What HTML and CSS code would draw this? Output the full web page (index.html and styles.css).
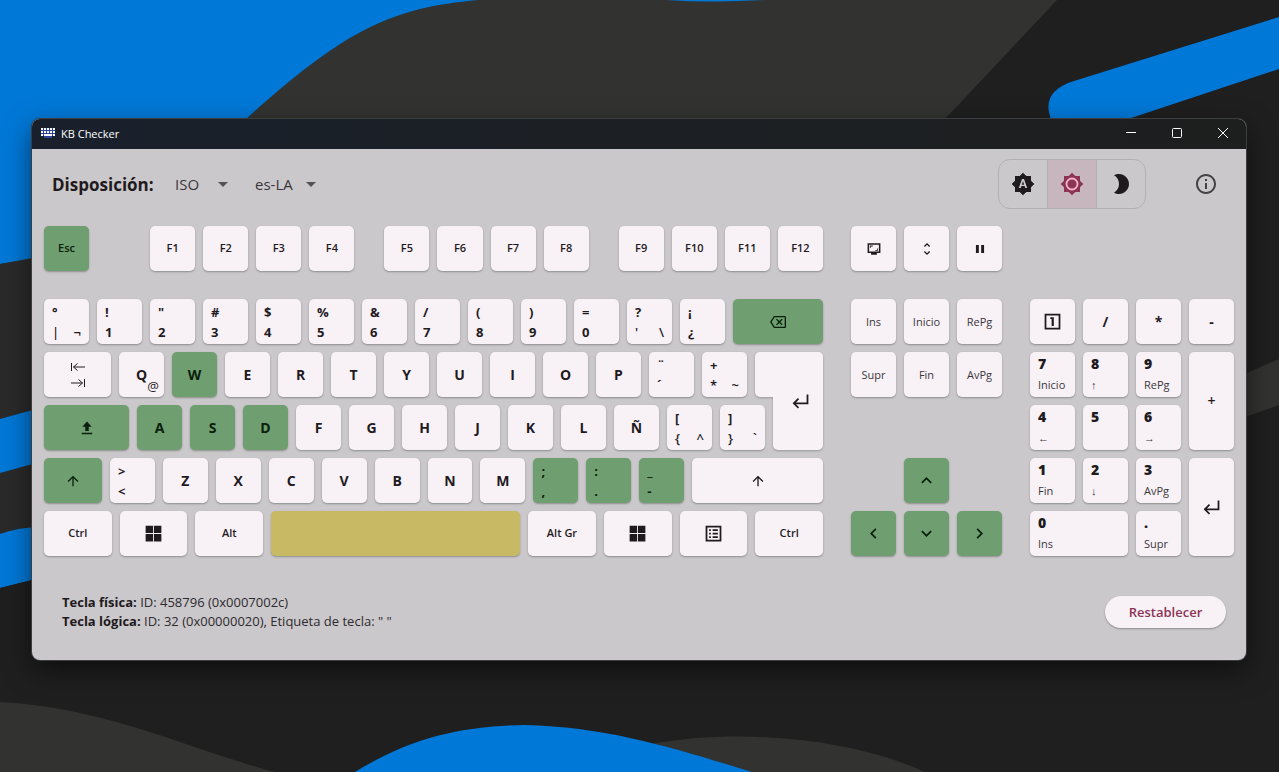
FILE: index.html
```html
<!DOCTYPE html>
<html lang="es">
<head>
<meta charset="utf-8">
<title>KB Checker</title>
<link rel="stylesheet" href="styles.css">
</head>
<body>
<svg class="wallpaper" viewBox="0 0 1279 772" preserveAspectRatio="none" aria-hidden="true">
  <rect width="1279" height="772" fill="#201f20"/>
  <path d="M0 0H1057L945 119V400H0Z" fill="#323231"/>
  <path d="M0 0H478C390 8 345 30 246 119V220L32 258L0 264Z" fill="#0078d7"/>
  <path d="M665 0H765Q715 3 665 0Z" fill="#0078d7"/>
  <path d="M1279 17L1074 81C1055 87 1046 97 1049 112L1052 125H1110L1279 69Z" fill="#0078d7"/>
  <path d="M0 264L40 258V600H0Z" fill="#2b2a2a"/>
  <path d="M0 419L40 408V462L0 473Z" fill="#0078d7"/>
  <path d="M0 534Q20 527 40 527V578L0 588Z" fill="#0078d7"/>
  <path d="M0 588L40 578V610H0Z" fill="#201f20"/>
  <path d="M1240 376L1279 359V405L1240 419Z" fill="#323231"/>
  <path d="M0 702C110 708 190 750 275 772H0Z" fill="#323231"/>
  <path d="M650 744C740 728 850 738 925 772H650Z" fill="#323231"/>
  <path d="M355 772C410 738 460 726 525 725C610 727 680 750 752 772Z" fill="#0078d7"/>
</svg>

<svg hidden>
  <symbol id="i-up" viewBox="0 0 24 24"><path d="M4 12l1.4 1.4L11 7.8V20h2V7.8l5.6 5.6L20 12l-8-8z"/></symbol>
  <symbol id="i-win" viewBox="0 0 24 24"><path d="M3 3h8.500v8.500H3zM12.500 3H21v8.500h-8.500zM3 12.500h8.500V21H3zM12.500 12.500H21V21h-8.500z"/></symbol>
  <symbol id="i-chev" viewBox="0 0 24 24"><path d="M12 8l-6 6 1.400 1.400L12 10.800l4.600 4.600L18 14z"/></symbol>
  <symbol id="i-enter" viewBox="0 0 24 24"><path d="M19 4v9H6.800l3.600-3.600L9 8l-6 6 6 6 1.400-1.400L6.800 15H21V4z"/></symbol>
</svg>

<main class="window">
  <header class="titlebar">
    <svg class="app-icon" viewBox="0 0 14 10" fill="#a9bbf0"><path fill="#2a439c" d="M0 0h14v8h-3v2H3V8H0z"/><path d="M0 0h2v2H0zM3 0h2v2H3zM6 0h2v2H6zM9 0h2v2H9zM12 0h2v2h-2zM0 3h2v2H0zM3 3h2v2H3zM6 3h2v2H6zM9 3h2v2H9zM12 3h2v2h-2zM0 6h2v2H0zM12 6h2v2h-2zM3 6h8v2H3z"/></svg>
    <h1 class="title">KB Checker</h1>
    <button class="win-btn" aria-label="Minimizar"><svg viewBox="0 0 10 10"><path d="M0 4.500h10"/></svg></button>
    <button class="win-btn" aria-label="Maximizar"><svg viewBox="0 0 10 10"><rect x=".5" y=".5" width="9" height="9" rx="1"/></svg></button>
    <button class="win-btn" aria-label="Cerrar"><svg viewBox="0 0 10 10"><path d="M0 0l10 10M10 0L0 10"/></svg></button>
  </header>

  <section class="toolbar">
    <span class="toolbar-label">Disposición:</span>
    <div class="picker picker-shape">
      <select aria-label="Disposición física"><option>ISO</option></select>
      <svg class="caret" viewBox="0 0 10 5"><path d="M0 0h10L5 5z"/></svg>
    </div>
    <div class="picker picker-lang">
      <select aria-label="Idioma"><option>es-LA</option></select>
      <svg class="caret" viewBox="0 0 10 5"><path d="M0 0h10L5 5z"/></svg>
    </div>
    <div class="themes">
      <button class="theme" aria-label="Tema automático"><svg viewBox="0 0 24 24"><path fill-rule="evenodd" d="M20 8.700V4h-4.700L12 .700 8.700 4H4v4.700L.700 12 4 15.300V20h4.700l3.300 3.300 3.300-3.300H20v-4.700l3.300-3.300zM14.300 16l-.7-2h-3.200l-.7 2H7.800L11 7h2l3.200 9zM10.850 12.650h2.300L12 9z"/></svg></button>
      <button class="theme theme-on" aria-label="Tema claro" aria-pressed="true"><svg viewBox="0 0 24 24"><path d="M20 8.700V4h-4.700L12 .700 8.700 4H4v4.700L.700 12 4 15.300V20h4.700l3.300 3.300 3.300-3.300H20v-4.700l3.300-3.300z"/><circle cx="12" cy="12" r="5.500" fill="none" stroke="#f3b4c8" stroke-width="1.800"/></svg></button>
      <button class="theme" aria-label="Tema oscuro"><svg viewBox="0 0 24 24"><path d="M10 2c-1.800 0-3.500.5-5 1.350C8 5.080 10 8.300 10 12s-2 6.920-5 8.650C6.500 21.500 8.200 22 10 22c5.520 0 10-4.480 10-10S15.520 2 10 2z"/></svg></button>
    </div>
    <button class="info" aria-label="Información"><svg viewBox="0 0 24 24"><path d="M11 7h2v2h-2zm0 4h2v6h-2zm1-9C6.480 2 2 6.480 2 12s4.480 10 10 10 10-4.480 10-10S17.520 2 12 2zm0 18c-4.410 0-8-3.590-8-8s3.590-8 8-8 8 3.590 8 8-3.590 8-8 8z"/></svg></button>
  </section>

  <section class="keyboard">
    <div class="block block-main">
      <div class="row row-fn">
        <button class="key small on">Esc</button><span class="space-wide"></span>
        <button class="key small">F1</button><button class="key small">F2</button><button class="key small">F3</button><button class="key small">F4</button><span class="space"></span>
        <button class="key small">F5</button><button class="key small">F6</button><button class="key small">F7</button><button class="key small">F8</button><span class="space"></span>
        <button class="key small">F9</button><button class="key small">F10</button><button class="key small">F11</button><button class="key small">F12</button>
      </div>
      <div class="row">
        <button class="key duo"><span>°</span><span class="pair"><b>|</b><b>¬</b></span></button>
        <button class="key duo"><span>!</span><span>1</span></button>
        <button class="key duo"><span>"</span><span>2</span></button>
        <button class="key duo"><span>#</span><span>3</span></button>
        <button class="key duo"><span>$</span><span>4</span></button>
        <button class="key duo"><span>%</span><span>5</span></button>
        <button class="key duo"><span>&amp;</span><span>6</span></button>
        <button class="key duo"><span>/</span><span>7</span></button>
        <button class="key duo"><span>(</span><span>8</span></button>
        <button class="key duo"><span>)</span><span>9</span></button>
        <button class="key duo"><span>=</span><span>0</span></button>
        <button class="key duo"><span>?</span><span class="pair"><b>'</b><b>\</b></span></button>
        <button class="key duo"><span>¡</span><span>¿</span></button>
        <button class="key w90 on" aria-label="Retroceso"><svg class="ico16" viewBox="0 0 24 24"><path d="M22 3H7c-.690 0-1.230.350-1.590.880L0 12l5.410 8.110c.360.530.900.890 1.590.890h15c1.100 0 2-.900 2-2V5c0-1.100-.900-2-2-2zm0 16H7.070L2.400 12l4.660-7H22v14zm-11.590-2L14 13.410 17.590 17 19 15.590 15.410 12 19 8.410 17.590 7 14 10.590 10.410 7 9 8.410 12.590 12 9 15.590z"/></svg></button>
      </div>
      <div class="home">
        <div class="row home-top">
          <button class="key w67" aria-label="Tab"><svg class="ico-tab" viewBox="0 0 16 26"><path d="M1.500 1v8M3.500 5H15M7.500 1.500L3.500 5l4 3.500M14.500 17v8M1 21h11.500M8.500 17.500l4 3.500-4 3.500"/></svg></button>
          <button class="key">Q<span class="alt">@</span></button><button class="key on">W</button><button class="key">E</button><button class="key">R</button><button class="key">T</button><button class="key">Y</button><button class="key">U</button><button class="key">I</button><button class="key">O</button><button class="key">P</button>
          <button class="key duo"><span>¨</span><span>´</span></button>
          <button class="key duo"><span>+</span><span class="pair"><b>*</b><b>~</b></span></button>
        </div>
        <div class="row home-low">
          <button class="key w85 on" aria-label="Bloq Mayús"><svg class="ico14" viewBox="0 0 24 24"><path d="M12 1L4 10h5v7h6v-7h5zM3 20h18v2.500H3z"/></svg></button>
          <button class="key on">A</button><button class="key on">S</button><button class="key on">D</button><button class="key">F</button><button class="key">G</button><button class="key">H</button><button class="key">J</button><button class="key">K</button><button class="key">L</button><button class="key">Ñ</button>
          <button class="key duo"><span>[</span><span class="pair"><b>{</b><b>^</b></span></button>
          <button class="key duo"><span>]</span><span class="pair"><b>}</b><b>`</b></span></button>
        </div>
        <button class="iso-enter" aria-label="Entrar"><svg class="ico21"><use href="#i-enter"/></svg></button>
      </div>
      <div class="row">
        <button class="key w58 on" aria-label="Mayús izquierda"><svg class="ico16"><use href="#i-up"/></svg></button>
        <button class="key duo"><span>&gt;</span><span>&lt;</span></button>
        <button class="key">Z</button><button class="key">X</button><button class="key">C</button><button class="key">V</button><button class="key">B</button><button class="key">N</button><button class="key">M</button>
        <button class="key duo on"><span>;</span><span>,</span></button>
        <button class="key duo on"><span>:</span><span>.</span></button>
        <button class="key duo on"><span>_</span><span>-</span></button>
        <button class="key w131" aria-label="Mayús derecha"><svg class="ico16"><use href="#i-up"/></svg></button>
      </div>
      <div class="row">
        <button class="key w68 small">Ctrl</button>
        <button class="key w68" aria-label="Windows"><svg class="ico21"><use href="#i-win"/></svg></button>
        <button class="key w68 small">Alt</button>
        <button class="key w250 last" aria-label="Espacio"></button>
        <button class="key w68 small">Alt Gr</button>
        <button class="key w68" aria-label="Windows"><svg class="ico21"><use href="#i-win"/></svg></button>
        <button class="key w68" aria-label="Menú"><svg class="ico21" viewBox="0 0 24 24"><path d="M3 3v18h18V3zm16 16H5V5h14zM11 7h6v2h-6zM11 11h6v2h-6zM11 15h6v2h-6zM7 7h2v2H7zM7 11h2v2H7zM7 15h2v2H7z"/></svg></button>
        <button class="key w68 small">Ctrl</button>
      </div>
    </div>

    <div class="block block-nav">
      <div class="row row-fn">
        <button class="key" aria-label="Imprimir pantalla"><svg class="ico14" viewBox="0 0 24 24"><path d="M1 2h22v17h-6v3H7v-3H1zm2.600 2.600v11.800h16.800V4.600zM5 6h5v1.500H6.500V10H5zM19 15h-5v-1.500h3.500V11H19z"/></svg></button>
        <button class="key" aria-label="Bloq Despl"><svg class="ico16" viewBox="0 0 24 24"><path d="M12 5.800L15.200 9l1.400-1.400L12 3 7.400 7.600 8.800 9zM12 18.200L8.800 15l-1.400 1.400L12 21l4.600-4.600L15.200 15z"/></svg></button>
        <button class="key" aria-label="Pausa"><svg class="ico14" viewBox="0 0 24 24"><path d="M5 5h5v14H5zM14 5h5v14h-5z"/></svg></button>
      </div>
      <div class="row"><button class="key light">Ins</button><button class="key light">Inicio</button><button class="key light">RePg</button></div>
      <div class="row"><button class="key light">Supr</button><button class="key light">Fin</button><button class="key light">AvPg</button></div>
      <div class="arrows">
        <button class="key on arrow-up" aria-label="Arriba"><svg class="ico21"><use href="#i-chev"/></svg></button>
        <button class="key on" aria-label="Izquierda"><svg class="ico21 left"><use href="#i-chev"/></svg></button>
        <button class="key on" aria-label="Abajo"><svg class="ico21 down"><use href="#i-chev"/></svg></button>
        <button class="key on" aria-label="Derecha"><svg class="ico21 right"><use href="#i-chev"/></svg></button>
      </div>
    </div>

    <div class="block-pad">
      <button class="key" aria-label="Bloq Num"><svg class="ico21" viewBox="0 0 24 24"><path d="M3 3v18h18V3zm16 16H5V5h14zM11 17h2.500V7H9.500v2H11z"/></svg></button>
      <button class="key">/</button><button class="key">*</button><button class="key">-</button>
      <button class="key num"><b>7</b><span>Inicio</span></button>
      <button class="key num"><b>8</b><span>↑</span></button>
      <button class="key num"><b>9</b><span>RePg</span></button>
      <button class="key tall plus">+</button>
      <button class="key num"><b>4</b><span>←</span></button>
      <button class="key num"><b>5</b><span></span></button>
      <button class="key num"><b>6</b><span>→</span></button>
      <button class="key num"><b>1</b><span>Fin</span></button>
      <button class="key num"><b>2</b><span>↓</span></button>
      <button class="key num"><b>3</b><span>AvPg</span></button>
      <button class="key tall" aria-label="Entrar"><svg class="ico21"><use href="#i-enter"/></svg></button>
      <button class="key num wide"><b>0</b><span>Ins</span></button>
      <button class="key num"><b>.</b><span>Supr</span></button>
    </div>
  </section>

  <footer class="status">
    <div>
      <p><b>Tecla física:</b> ID: 458796 (0x0007002c)</p>
      <p><b>Tecla lógica:</b> ID: 32 (0x00000020), Etiqueta de tecla: " "</p>
    </div>
    <button class="reset">Restablecer</button>
  </footer>
</main>
</body>
</html>
```

FILE: styles.css
```css
* { box-sizing: border-box; }

body {
  margin: 0;
  min-height: 100vh;
  padding: 119px 33px 112px 32px;
  font-family: "Open Sans", "Noto Sans", sans-serif;
  color: #1f1a1e;
  background: #201f20;
}

button, select {
  font: inherit;
  color: inherit;
  border: 0;
  padding: 0;
  background: none;
}

svg { fill: currentColor; display: block; }
svg[hidden] { display: none; }

.wallpaper {
  position: absolute;
  inset: 0;
  width: 100%;
  height: 100%;
  z-index: -1;
}

.window {
  border-radius: 8px;
  background: #cac8ca;
  box-shadow: 0 0 0 1px #3c3d3e, 0 10px 28px rgba(0, 0, 0, .55);
  overflow: hidden;
}

/* Title bar */
.titlebar {
  display: flex;
  align-items: center;
  height: 30px;
  padding: 0 0 2px 9px;
  background: linear-gradient(90deg, #19202c, #1c2024 50%, #1d1e1e);
  color: #fff;
}
.app-icon { width: 14px; height: 10px; }
.title {
  flex: 1;
  margin: 0 0 0 6px;
  font-size: 11px;
  font-weight: 400;
}
.win-btn {
  display: flex;
  justify-content: center;
  width: 46px;
}
.win-btn svg {
  width: 10px;
  height: 10px;
  overflow: visible;
  fill: none;
  stroke: #fff;
  stroke-width: 1;
}

/* Toolbar */
.toolbar {
  display: flex;
  align-items: center;
  height: 70px;
  padding: 0 30px 0 20px;
}
.toolbar-label {
  width: 123px;
  font-size: 17px;
  font-weight: 700;
}
.picker {
  display: flex;
  align-items: center;
  justify-content: space-between;
  width: 53px;
  margin-right: 27px;
  font-size: 15px;
  font-weight: 400;
}
.picker-lang { width: 61px; }
.picker select {
  appearance: none;
  flex: 1;
  width: 40px;
  color: #3a363a;
}
.caret { width: 10px; height: 5px; color: #555255; }
.themes {
  display: flex;
  margin-left: auto;
  border: 1px solid #b3b0b3;
  border-radius: 12px;
  overflow: hidden;
}
.theme {
  display: flex;
  align-items: center;
  justify-content: center;
  width: 48px;
  height: 48px;
}
.theme + .theme { width: 49px; border-left: 1px solid #b3b0b3; }
.theme-on { background: #c8b6bf; color: #8d3354; }
.theme svg, .info svg { width: 24px; height: 24px; }
.info { margin-left: 48px; margin-right: -2px; color: #444145; }

/* Keyboard */
.keyboard {
  display: flex;
  gap: 28px;
  padding: 7px 12px 0;
}
.block { display: flex; flex-direction: column; gap: 8px; }
.block-main { flex: 779 1 0; }
.block-nav { flex: 151 1 0; }
.row { display: flex; gap: 8px; }
.row-fn { margin-bottom: 20px; }
.space-wide { flex: 45 1 0; }
.space { flex: 14 1 0; }

.key {
  position: relative;
  display: flex;
  align-items: center;
  justify-content: center;
  flex: 45 1 0;
  min-width: 0;
  height: 45px;
  border-radius: 5px;
  background: #f8f2f7;
  box-shadow: 0 1px 2px rgba(0, 0, 0, .3);
  font-size: 14px;
  font-weight: 700;
  line-height: 20px;
}
.on { background: #6f9e70; color: #0a200c; }
.last { background: #c8b964; }
.w58 { flex-grow: 58; }
.w67 { flex-grow: 67; }
.w68 { flex-grow: 68; }
.w85 { flex-grow: 85; }
.w90 { flex-grow: 90; }
.w131 { flex-grow: 131; }
.w250 { flex-grow: 250; }
.small { padding-bottom: 1px; font-size: 11px; font-weight: 600; }
.light { font-size: 11px; font-weight: 400; color: #3a363a; }

.duo {
  flex-direction: column;
  align-items: stretch;
  justify-content: center;
  padding-top: 1px;
  text-align: left;
  font-size: 13px;
}
.duo > span { padding: 0 8px; }
.pair { display: flex; justify-content: space-between; }
.pair b { font-weight: 600; }
.alt {
  position: absolute;
  right: 5px;
  bottom: 1px;
  font-size: 13px;
  font-weight: 400;
}

.home {
  display: grid;
  grid-template-columns: 703fr 68fr;
  gap: 8px;
}
.home-low { grid-row: 2; margin-right: -18px; }
.iso-enter {
  position: relative;
  grid-column: 2;
  grid-row: 1 / 3;
  display: flex;
  align-items: center;
  justify-content: center;
  padding-left: 22px;
  filter: drop-shadow(0 1px 1px rgba(0, 0, 0, .25));
}
.iso-enter::before, .iso-enter::after {
  content: "";
  position: absolute;
  top: 0;
  right: 0;
  z-index: -1;
  background: #f8f2f7;
}
.iso-enter::before { left: 0; height: 45px; border-radius: 5px 5px 0 5px; }
.iso-enter::after { left: 18px; height: 98px; border-radius: 0 5px 5px 5px; }

.arrows {
  display: grid;
  grid-template-columns: repeat(3, 1fr);
  gap: 8px;
  margin-top: 53px;
}
.arrow-up { grid-column: 2; }
.arrow-up + .key { grid-column: 1; }

.block-pad {
  flex: 204 1 0;
  display: grid;
  grid-template-columns: repeat(4, 1fr);
  grid-auto-rows: 45px;
  gap: 8px;
  padding-top: 73px;
}
.tall { grid-row: span 2; height: auto; }
.plus { font-weight: 600; }
.wide { grid-column: span 2; }
.num {
  flex-direction: column;
  align-items: flex-start;
  justify-content: flex-start;
  padding: 2px 8px 0;
}
.num span {
  font-size: 11px;
  font-weight: 400;
  line-height: 22px;
  color: #3a363a;
}

.ico14 { width: 14px; height: 14px; }
.ico16 { width: 16px; height: 16px; }
.ico21 { width: 21px; height: 21px; }
.ico-tab {
  width: 16px;
  height: 26px;
  fill: none;
  stroke: currentColor;
}
.left { transform: rotate(-90deg); }
.down { transform: rotate(180deg); }
.right { transform: rotate(90deg); }

/* Status */
.status {
  display: flex;
  align-items: center;
  justify-content: space-between;
  padding: 37px 20px 29px 30px;
  font-size: 13px;
  line-height: 19px;
}
.status p { margin: 0; font-weight: 400; color: #2e2a2e; }
.status b { font-weight: 700; color: #1f1a1e; }
.reset {
  width: 121px;
  height: 32px;
  border-radius: 16px;
  background: #f8f2f7;
  box-shadow: 0 1px 2px rgba(0, 0, 0, .3);
  color: #8d3354;
  font-weight: 600;
}
```
